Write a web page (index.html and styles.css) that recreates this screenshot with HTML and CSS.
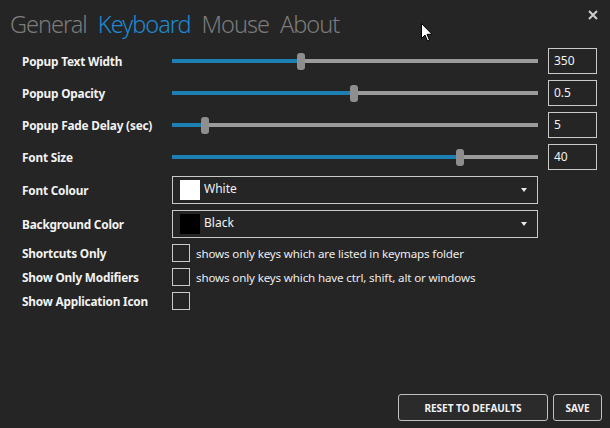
FILE: index.html
```html
<!doctype html>
<html lang="en">
<head>
  <meta charset="utf-8">
  <title>Settings</title>
  <link rel="stylesheet" href="styles.css">
</head>
<body>
  <div id="settings">
    <div class="tabs">
      <span class="tab">General</span>
      <span class="tab active">Keyboard</span>
      <span class="tab">Mouse</span>
      <span class="tab">About</span>
    </div>
    <svg class="close" width="10" height="10" viewBox="0 0 10 10">
      <path d="M1 1 L9 9 M9 1 L1 9" stroke="#cfcfcf" stroke-width="2"/>
    </svg>
    <svg class="cursor" width="12" height="19" viewBox="0 0 12 19">
      <path d="M0.5 0.5 L0.5 15.5 L4 12 L6.5 18 L8.5 17.2 L6 11.3 L11 11.3 Z" fill="#fff" stroke="#000" stroke-width="1"/>
    </svg>

    <div class="form">
      <div class="row slider-row">
        <label class="caption">Popup Text Width</label>
        <div class="slider"><div class="fill" style="width: 34.3%"></div><div class="thumb"></div><div class="rest"></div></div>
        <div class="value">350</div>
      </div>
      <div class="row slider-row">
        <label class="caption">Popup Opacity</label>
        <div class="slider"><div class="fill" style="width: 48.8%"></div><div class="thumb"></div><div class="rest"></div></div>
        <div class="value">0.5</div>
      </div>
      <div class="row slider-row">
        <label class="caption">Popup Fade Delay (sec)</label>
        <div class="slider"><div class="fill" style="width: 8.2%"></div><div class="thumb"></div><div class="rest"></div></div>
        <div class="value">5</div>
      </div>
      <div class="row slider-row">
        <label class="caption">Font Size</label>
        <div class="slider"><div class="fill" style="width: 78%"></div><div class="thumb"></div><div class="rest"></div></div>
        <div class="value">40</div>
      </div>

      <div class="row combo-row">
        <label class="caption">Font Colour</label>
        <div class="combo">
          <span class="swatch white"></span>
          <span class="combo-text">White</span>
          <span class="arrow"></span>
        </div>
      </div>
      <div class="row combo-row">
        <label class="caption">Background Color</label>
        <div class="combo">
          <span class="swatch black"></span>
          <span class="combo-text">Black</span>
          <span class="arrow"></span>
        </div>
      </div>

      <div class="row check-row">
        <label class="caption">Shortcuts Only</label>
        <span class="check"></span>
        <span class="hint">shows only keys which are listed in keymaps folder</span>
      </div>
      <div class="row check-row">
        <label class="caption">Show Only Modifiers</label>
        <span class="check"></span>
        <span class="hint">shows only keys which have ctrl, shift, alt or windows</span>
      </div>
      <div class="row check-row">
        <label class="caption">Show Application Icon</label>
        <span class="check"></span>
      </div>
    </div>

    <div class="buttons">
      <a href="#" class="btn reset">Reset to defaults</a>
      <a href="#" class="btn save">Save</a>
    </div>
  </div>
</body>
</html>
```

FILE: styles.css
```css
body {
  margin: 0;
  background: #252525;
  font-family: "Noto Sans", sans-serif;
  color: #f2f2f2;
}
#settings {
  position: relative;
  width: 610px;
  height: 428px;
  box-sizing: border-box;
}

.tabs {
  display: flex;
  gap: 11px;
  padding: 8px 0 0 10px;
  box-sizing: border-box;
  height: 48px;
  font-size: 23.5px;
  font-weight: 300;
  letter-spacing: -1px;
}
.tab {
  color: #7b7b7b;
}
.tab.active {
  color: #1f8ad2;
}
.close {
  position: absolute;
  top: 10px;
  left: 588px;
}
.cursor {
  position: absolute;
  left: 421px;
  top: 23px;
}

.form {
  padding-left: 22px;
}
.row {
  display: flex;
  align-items: center;
}
.caption {
  width: 150px;
  flex: none;
  font-size: 11.8px;
  font-weight: bold;
  letter-spacing: -0.2px;
}

.slider-row {
  height: 26px;
  margin-bottom: 6px;
}
.slider {
  width: 366px;
  display: flex;
  align-items: center;
}
.slider .fill {
  height: 4px;
  background: #1e7fb3;
}
.slider .rest {
  flex: 1;
  height: 4px;
  background: #9b9b9b;
}
.slider .thumb {
  width: 8px;
  height: 17px;
  border-radius: 3px;
  background: #8e8e8e;
  margin: 0 -1px;
  position: relative;
}
.value {
  margin-left: 10px;
  width: 49px;
  height: 26px;
  box-sizing: border-box;
  border: 1px solid #c9c9c9;
  font-size: 12px;
  line-height: 24px;
  padding-left: 5px;
}

.combo-row {
  height: 28px;
  margin-bottom: 6px;
}
.combo {
  width: 366px;
  height: 28px;
  box-sizing: border-box;
  border: 1px solid #c9c9c9;
  display: flex;
  align-items: center;
  padding: 0 0 0 7px;
}
.swatch {
  width: 20px;
  height: 20px;
  margin-right: 4px;
}
.swatch.white { background: #fff; }
.swatch.black { background: #000; }
.combo-text {
  flex: 1;
  font-size: 12px;
  margin-top: -4px;
}
.arrow {
  width: 0;
  height: 0;
  border-left: 3.5px solid transparent;
  border-right: 3.5px solid transparent;
  border-top: 4px solid #e8e8e8;
  margin-right: 10px;
}

.check-row {
  height: 18px;
  margin-bottom: 6px;
}
.check {
  width: 18px;
  height: 18px;
  box-sizing: border-box;
  border: 1px solid #c9c9c9;
}
.hint {
  margin-left: 6px;
  font-size: 11.6px;
  letter-spacing: -0.15px;
  color: #ececec;
}

.buttons {
  position: absolute;
  right: 8px;
  bottom: 7px;
  display: flex;
  gap: 5px;
}
.btn {
  height: 27px;
  box-sizing: border-box;
  border: 1px solid #c0c0c0;
  border-radius: 3px;
  background: #2b2b2b;
  color: #f2f2f2;
  text-decoration: none;
  text-transform: uppercase;
  font-size: 10px;
  font-weight: bold;
  display: flex;
  align-items: center;
  justify-content: center;
}
.btn.reset { width: 150px; }
.btn.save { width: 49px; }
```
